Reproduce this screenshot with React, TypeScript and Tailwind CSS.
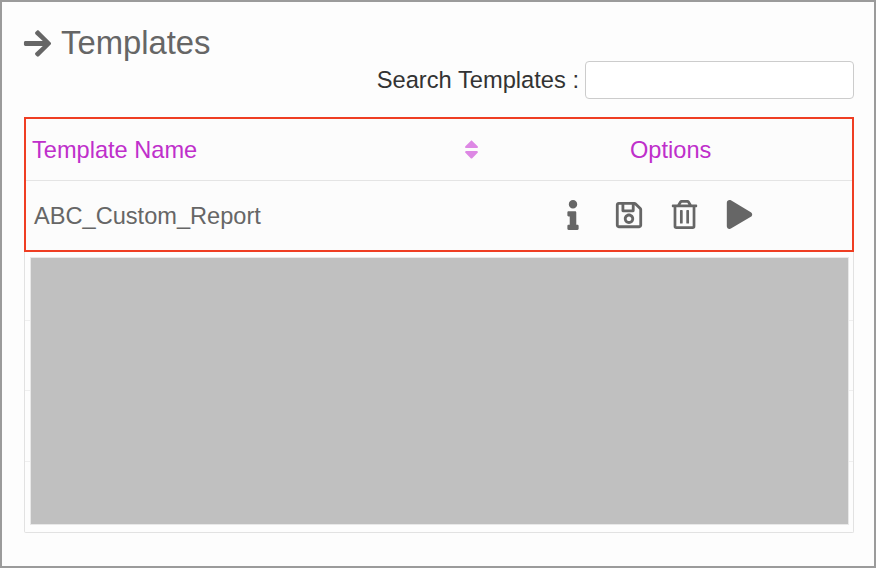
import React from 'react';
import { FaArrowRight, FaInfo, FaPlay, FaRegSave, FaRegTrashAlt, FaSort } from 'react-icons/fa';

export default function App() {
  return (
    <div className="w-[876px] h-[568px] border-2 border-[#9b9b9b] bg-[#fdfdfd] pl-[22px] pr-[20px] font-['Liberation_Sans',Arial,sans-serif] overflow-hidden">
      <div className="flex items-center h-[30px] mt-[26px] text-[#666666]">
        <FaArrowRight size={31} className="-ml-[2px]" />
        <h1 className="ml-[8px] text-[32.8px] leading-none">Templates</h1>
      </div>

      <div className="flex items-center justify-end h-[38px] mt-[3px]">
        <label className="pt-[2px] text-[23.7px] leading-none text-[#333333] mr-[6px]">Search Templates :</label>
        <input className="w-[269px] h-[38px] bg-white border border-[#cccccc] rounded-[4px]" />
      </div>

      <div className="relative mt-[18px] w-[830px] h-[416px] border border-t-0 border-[#e2e2e2] rounded-b-[2px]">
        <div className="-mx-px w-[830px] h-[135px] border-2 border-[#ef3e23] bg-[#fcfcfc]">
          <div className="flex items-center h-[62px] border-b border-[#e4e4e4] text-[23.6px] text-[#bf2fcb]">
            <span className="pt-[2px] ml-[6px] w-[428px]">Template Name</span>
            <FaSort size={23} className="text-[#dd88e4] -mt-[1px]" />
            <span className="pt-[2px] ml-[147px]">Options</span>
          </div>
          <div className="flex items-center h-[69px] text-[#666666]">
            <span className="pt-[2px] ml-[8px] w-[526px] text-[23.6px]">ABC_Custom_Report</span>
            <FaInfo size={30} className="-ml-[2px] -mt-[2px]" />
            <FaRegSave size={30} className="ml-[26px] -mt-[2px]" />
            <FaRegTrashAlt size={29} className="ml-[26px] -mt-[2px]" />
            <FaPlay size={29} className="ml-[26px] -mt-[2px]" />
          </div>
        </div>
        <div className="h-[69px] border-b border-[#efefef]" />
        <div className="h-[70px] border-b border-[#efefef]" />
        <div className="h-[71px] border-b border-[#efefef]" />
        <div className="absolute top-[140px] left-[5px] w-[819px] h-[268px] bg-[#c0c0c0] border border-[#e8e8e8]" />
      </div>
    </div>
  );
}
